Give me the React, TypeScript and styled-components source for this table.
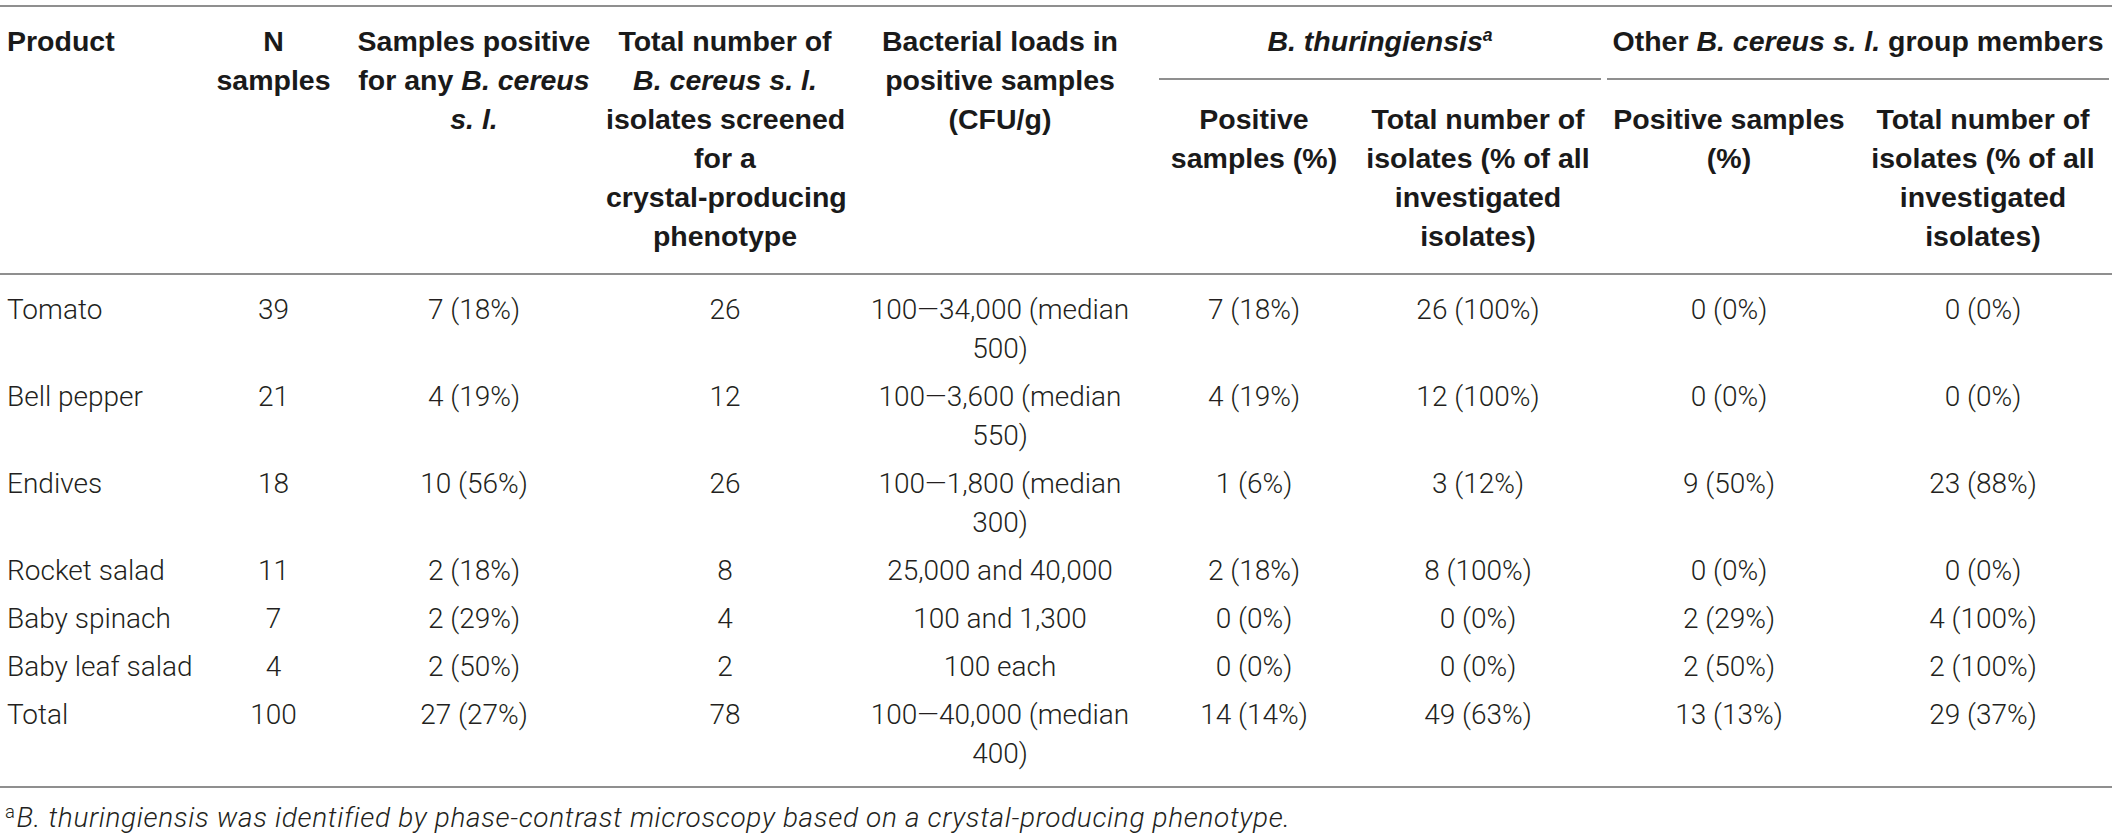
import React from 'react'
import styled, { createGlobalStyle } from 'styled-components'

const GlobalStyle = createGlobalStyle`
  body {
    margin: 0;
    background: #ffffff;
    color: #231f20;
  }
`

const RULE = '2px solid #8f8f8f'

const Page = styled.div`
  padding-top: 5px;
  width: 2112px;
`

const Table = styled.table`
  width: 2112px;
  table-layout: fixed;
  border-collapse: collapse;
  border-top: ${RULE};
  border-bottom: ${RULE};
`

const Head = styled.thead`
  border-bottom: ${RULE};
`

const HeadCell = styled.th<{ $left?: boolean; $sub?: boolean }>`
  font-family: 'Liberation Sans', Arial, sans-serif;
  font-weight: 700;
  font-size: 28.5px;
  line-height: 39px;
  color: #1a1a1a;
  white-space: nowrap;
  vertical-align: top;
  text-align: ${(p) => (p.$left ? 'left' : 'center')};
  padding: ${(p) => (p.$sub ? '20px 0 17px' : '15px 0 17px')};
  padding-left: ${(p) => (p.$left ? '7px' : '0')};
`

const GroupCell = styled.th`
  font-family: 'Liberation Sans', Arial, sans-serif;
  font-weight: 700;
  font-size: 28.5px;
  line-height: 39px;
  color: #1a1a1a;
  white-space: nowrap;
  vertical-align: top;
  text-align: center;
  padding: 15px 0 0;
`

const GroupRule = styled.div`
  margin: 17px 3px 0;
  border-bottom: ${RULE};
`

const Sp = styled.i`
  font-style: italic;
`

const Sup = styled.sup`
  font-size: 0.62em;
  line-height: 0;
  vertical-align: 0.55em;
`

const Body = styled.tbody`
  tr:first-child td {
    padding-top: 15px;
  }
  tr:last-child td {
    padding-bottom: 13px;
  }
`

const Cell = styled.td<{ $left?: boolean }>`
  font-family: Roboto, 'Liberation Sans', sans-serif;
  font-weight: 300;
  font-size: 28px;
  line-height: 39px;
  color: #231f20;
  white-space: nowrap;
  vertical-align: top;
  text-align: ${(p) => (p.$left ? 'left' : 'center')};
  padding: 4px 0 5px;
  padding-left: ${(p) => (p.$left ? '7px' : '0')};
`

const Footnote = styled.p`
  margin: 10px 0 0 5px;
  font-family: Roboto, 'Liberation Sans', sans-serif;
  font-weight: 300;
  font-size: 28px;
  line-height: 39px;
  letter-spacing: 0.65px;
  color: #231f20;
  white-space: nowrap;
`

const NoteSup = styled.sup`
  font-size: 0.66em;
  line-height: 0;
  vertical-align: 0.5em;
  margin-right: 1px;
`

const colWidths = [205, 137, 264, 238, 312, 196, 252, 250, 258]

type Row = string[][]

const rows: Row[] = [
  [['Tomato'], ['39'], ['7 (18%)'], ['26'], ['100—34,000 (median', '500)'], ['7 (18%)'], ['26 (100%)'], ['0 (0%)'], ['0 (0%)']],
  [['Bell pepper'], ['21'], ['4 (19%)'], ['12'], ['100—3,600 (median', '550)'], ['4 (19%)'], ['12 (100%)'], ['0 (0%)'], ['0 (0%)']],
  [['Endives'], ['18'], ['10 (56%)'], ['26'], ['100—1,800 (median', '300)'], ['1 (6%)'], ['3 (12%)'], ['9 (50%)'], ['23 (88%)']],
  [['Rocket salad'], ['11'], ['2 (18%)'], ['8'], ['25,000 and 40,000'], ['2 (18%)'], ['8 (100%)'], ['0 (0%)'], ['0 (0%)']],
  [['Baby spinach'], ['7'], ['2 (29%)'], ['4'], ['100 and 1,300'], ['0 (0%)'], ['0 (0%)'], ['2 (29%)'], ['4 (100%)']],
  [['Baby leaf salad'], ['4'], ['2 (50%)'], ['2'], ['100 each'], ['0 (0%)'], ['0 (0%)'], ['2 (50%)'], ['2 (100%)']],
  [['Total'], ['100'], ['27 (27%)'], ['78'], ['100—40,000 (median', '400)'], ['14 (14%)'], ['49 (63%)'], ['13 (13%)'], ['29 (37%)']],
]

const Lines = ({ lines }: { lines: string[] }) => (
  <>
    {lines.map((line, i) => (
      <React.Fragment key={i}>
        {i > 0 && <br />}
        {line}
      </React.Fragment>
    ))}
  </>
)

const App = () => (
  <>
    <GlobalStyle />
    <Page>
      <Table>
        <colgroup>
          {colWidths.map((w, i) => (
            <col key={i} style={{ width: w }} />
          ))}
        </colgroup>
        <Head>
          <tr>
            <HeadCell rowSpan={2} $left>
              Product
            </HeadCell>
            <HeadCell rowSpan={2}>
              N<br />
              samples
            </HeadCell>
            <HeadCell rowSpan={2}>
              Samples positive
              <br />
              for any <Sp>B. cereus</Sp>
              <br />
              <Sp>s. l.</Sp>
            </HeadCell>
            <HeadCell rowSpan={2}>
              Total number of
              <br />
              <Sp>B. cereus s. l.</Sp>
              <br />
              isolates screened
              <br />
              for a<br />
              crystal-producing
              <br />
              phenotype
            </HeadCell>
            <HeadCell rowSpan={2}>
              Bacterial loads in
              <br />
              positive samples
              <br />
              (CFU/g)
            </HeadCell>
            <GroupCell colSpan={2}>
              <Sp>
                B. thuringiensis<Sup>a</Sup>
              </Sp>
              <GroupRule />
            </GroupCell>
            <GroupCell colSpan={2}>
              Other <Sp>B. cereus s. l.</Sp> group members
              <GroupRule />
            </GroupCell>
          </tr>
          <tr>
            <HeadCell $sub>
              Positive
              <br />
              samples (%)
            </HeadCell>
            <HeadCell $sub>
              Total number of
              <br />
              isolates (% of all
              <br />
              investigated
              <br />
              isolates)
            </HeadCell>
            <HeadCell $sub>
              Positive samples
              <br />
              (%)
            </HeadCell>
            <HeadCell $sub>
              Total number of
              <br />
              isolates (% of all
              <br />
              investigated
              <br />
              isolates)
            </HeadCell>
          </tr>
        </Head>
        <Body>
          {rows.map((row, r) => (
            <tr key={r}>
              {row.map((cell, c) => (
                <Cell key={c} $left={c === 0}>
                  <Lines lines={cell} />
                </Cell>
              ))}
            </tr>
          ))}
        </Body>
      </Table>
      <Footnote>
        <NoteSup>a</NoteSup>
        <Sp>B. thuringiensis was identified by phase-contrast microscopy based on a crystal-producing phenotype.</Sp>
      </Footnote>
    </Page>
  </>
)

export default App
